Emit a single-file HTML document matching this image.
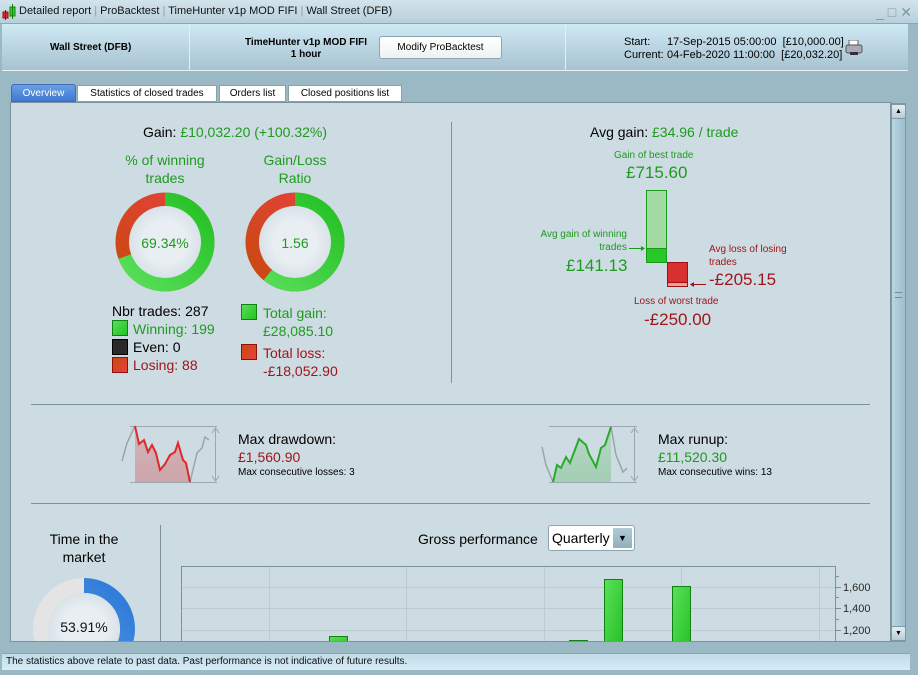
<!DOCTYPE html>
<html><head><meta charset="utf-8"><style>
*{margin:0;padding:0;box-sizing:border-box}
body{width:918px;height:675px;overflow:hidden;background:#9bb9c5;font-family:"Liberation Sans",Arial,sans-serif;position:relative;font-size:11px;color:#000}
.a{position:absolute;white-space:nowrap}
.g{color:#1f9a1f}.r{color:#a0151a}
</style></head><body>
<!-- title bar -->
<div class="a" style="left:0;top:0;width:918px;height:24px;background:linear-gradient(#d2e4ec,#b8d0db);border-bottom:1px solid #8aa6b2"></div>
<svg class="a" style="left:2px;top:4px" width="14" height="16"><rect x="1" y="8" width="5" height="6" fill="#e03030" stroke="#901010"/><line x1="3.5" y1="6" x2="3.5" y2="16" stroke="#901010"/><rect x="8" y="3" width="5" height="9" fill="#30d030" stroke="#108010"/><line x1="10.5" y1="0" x2="10.5" y2="15" stroke="#108010"/></svg>
<div class="a" style="left:19px;top:5px;font-size:11px;color:#111">Detailed report <span style="color:#999">|</span> ProBacktest <span style="color:#999">|</span> TimeHunter v1p MOD FIFI <span style="color:#999">|</span> Wall Street (DFB)</div>
<div class="a" style="left:876px;top:4px;color:#7f98a4;font-size:14px;letter-spacing:4px">_□✕</div>
<!-- header -->
<div class="a" style="left:2px;top:24px;width:906px;height:47px;background:linear-gradient(#cfe9f5,#a7c3cf);border-bottom:1px solid #e8f2f6"></div>
<div class="a" style="left:189px;top:25px;width:1px;height:46px;background:#e6f0f4"></div>
<div class="a" style="left:565px;top:25px;width:1px;height:46px;background:#e6f0f4"></div>
<div class="a" style="left:50px;top:42px;font-weight:bold;font-size:10px">Wall Street (DFB)</div>
<div class="a" style="left:245px;top:37px;font-weight:bold;font-size:10px;text-align:center;line-height:12px">TimeHunter v1p MOD FIFI<br>1 hour</div>
<div class="a" style="left:379px;top:36px;width:123px;height:23px;background:linear-gradient(#fff,#eef2f4);border:1px solid #8ea5b0;border-radius:3px;font-size:10px;text-align:center;line-height:21px">Modify ProBacktest</div>
<div class="a" style="left:624px;top:36px;font-size:11px;line-height:13px">Start:<br>Current:</div>
<div class="a" style="left:667px;top:36px;font-size:11px;line-height:13px">17-Sep-2015 05:00:00&nbsp; [£10,000.00]<br>04-Feb-2020 11:00:00&nbsp; [£20,032.20]</div>
<svg class="a" style="left:845px;top:40px" width="18" height="16"><rect x="4" y="0" width="9" height="6" fill="#fff" stroke="#666"/><rect x="1" y="5" width="16" height="8" rx="2" fill="#aab" stroke="#555"/><rect x="5" y="12" width="8" height="3" fill="#333"/></svg>
<!-- tabs -->
<div class="a" style="left:11px;top:84px;width:65px;height:18px;background:linear-gradient(#6a9fe6,#3f78d0);border:1px solid #3a6cb8;border-radius:3px 3px 0 0;color:#fff;font-size:10px;text-align:center;line-height:17px">Overview</div>
<div class="a" style="left:77px;top:85px;width:140px;height:17px;background:#fff;border:1px solid #8aa0aa;font-size:10px;text-align:center;line-height:16px">Statistics of closed trades</div>
<div class="a" style="left:219px;top:85px;width:67px;height:17px;background:#fff;border:1px solid #8aa0aa;font-size:10px;text-align:center;line-height:16px">Orders list</div>
<div class="a" style="left:288px;top:85px;width:114px;height:17px;background:#fff;border:1px solid #8aa0aa;font-size:10px;text-align:center;line-height:16px">Closed positions list</div>
<!-- content -->
<div class="a" style="left:10px;top:102px;width:881px;height:540px;background:#cddce3;border:1px solid #7b929d;overflow:hidden"></div>
<!-- scrollbar -->
<div class="a" style="left:891px;top:103px;width:15px;height:539px;background:linear-gradient(90deg,#b8d6e2,#9dc0ce);border:1px solid #7e98a4"></div>
<div class="a" style="left:891px;top:104px;width:15px;height:15px;background:linear-gradient(#e4eef2,#b8ccd5);border:1px solid #7e98a4;border-radius:2px;font-size:7px;text-align:center;line-height:13px">▲</div>
<div class="a" style="left:891px;top:626px;width:15px;height:15px;background:linear-gradient(#e4eef2,#b8ccd5);border:1px solid #7e98a4;border-radius:2px;font-size:7px;text-align:center;line-height:13px">▼</div>
<div class="a" style="left:895px;top:292px;width:7px;height:6px;border-top:1px solid #789;border-bottom:1px solid #789"></div>
<!-- top section -->
<div class="a" style="left:0;top:124px;width:470px;text-align:center;font-size:14px">Gain: <span class="g">£10,032.20 (+100.32%)</span></div>
<div class="a" style="left:451px;top:122px;width:1px;height:261px;background:#7b929d"></div>
<div class="a g" style="left:105px;top:151px;width:120px;text-align:center;font-size:14px;line-height:18px">% of winning<br>trades</div>
<div class="a g" style="left:235px;top:151px;width:120px;text-align:center;font-size:14px;line-height:18px">Gain/Loss<br>Ratio</div>
<svg class="a" style="left:0;top:0" width="918" height="675">
<defs>
<linearGradient id="gr" x1="0" y1="0" x2="1" y2="1"><stop offset="0" stop-color="#5ce05c"/><stop offset="1" stop-color="#22c022"/></linearGradient>
<linearGradient id="rd" x1="0" y1="0" x2="1" y2="1"><stop offset="0" stop-color="#c84a10"/><stop offset="1" stop-color="#e84040"/></linearGradient>
<linearGradient id="bl" x1="0" y1="0" x2="1" y2="1"><stop offset="0" stop-color="#5aa0e8"/><stop offset="1" stop-color="#2c78d8"/></linearGradient>
<radialGradient id="in"><stop offset="0.6" stop-color="#e8eef2"/><stop offset="1" stop-color="#d8e2e8"/></radialGradient>
<linearGradient id="pr" x1="0" y1="0" x2="0" y2="1"><stop offset="0" stop-color="#d04040" stop-opacity=".25"/><stop offset="1" stop-color="#d04040" stop-opacity=".35"/></linearGradient>
<linearGradient id="pg" x1="0" y1="0" x2="0" y2="1"><stop offset="0" stop-color="#40b040" stop-opacity=".15"/><stop offset="1" stop-color="#40b040" stop-opacity=".3"/></linearGradient>
</defs>
<g transform="translate(165,242) rotate(-90)">
<circle r="42.5" fill="none" stroke="url(#rd)" stroke-width="14"/>
<circle r="42.5" fill="none" stroke="url(#gr)" stroke-width="14" stroke-dasharray="185.2 300"/>
<circle r="36" fill="url(#in)"/>
</g>
<g transform="translate(295,242) rotate(-90)">
<circle r="42.5" fill="none" stroke="url(#rd)" stroke-width="14"/>
<circle r="42.5" fill="none" stroke="url(#gr)" stroke-width="14" stroke-dasharray="162.6 300"/>
<circle r="36" fill="url(#in)"/>
</g>
<text x="165" y="248" text-anchor="middle" font-size="14" fill="#1f9a1f" font-family="Liberation Sans">69.34%</text>
<text x="295" y="248" text-anchor="middle" font-size="14" fill="#1f9a1f" font-family="Liberation Sans">1.56</text>
<rect x="112.5" y="320.5" width="15" height="15" fill="url(#gr)" stroke="#108010"/>
<rect x="112.5" y="339.5" width="15" height="15" fill="#2a2a2a" stroke="#000"/>
<rect x="112.5" y="357.5" width="15" height="15" fill="url(#rd)" stroke="#901010"/>
<rect x="241.5" y="304.5" width="15" height="15" fill="url(#gr)" stroke="#108010"/>
<rect x="241.5" y="344.5" width="15" height="15" fill="url(#rd)" stroke="#901010"/>
<rect x="646.5" y="190.5" width="20" height="72" fill="#a2dca2" stroke="#1a9a1a"/>
<rect x="646.5" y="248.5" width="20" height="14" fill="#28c828" stroke="#1a9a1a"/>
<rect x="667.5" y="262.5" width="20" height="24" fill="#d83030" stroke="#a01010"/>
<rect x="667.5" y="282.5" width="20" height="4" fill="#e8a0a0" stroke="#a01010"/>
<line x1="629" y1="248.5" x2="644" y2="248.5" stroke="#1a9a1a"/><path d="M641 246l4 2.5-4 2.5z" fill="#1a9a1a"/>
<line x1="692" y1="284.5" x2="706" y2="284.5" stroke="#a01010"/><path d="M694 282l-4 2.5 4 2.5z" fill="#a01010"/>
<line x1="31" y1="404.5" x2="870" y2="404.5" stroke="#7b929d"/>
<line x1="31" y1="503.5" x2="870" y2="503.5" stroke="#7b929d"/>
<line x1="160.5" y1="525" x2="160.5" y2="642" stroke="#7b929d"/>
<line x1="130" y1="426.5" x2="217" y2="426.5" stroke="#99a8b0"/>
<line x1="130" y1="482.5" x2="217" y2="482.5" stroke="#99a8b0"/>
<line x1="215.5" y1="429" x2="215.5" y2="480" stroke="#99a8b0"/>
<path d="M212 433l3.5-5 3.5 5M212 476l3.5 5 3.5-5" fill="none" stroke="#99a8b0"/>
<path d="M135 426L139 444L144 440L148 452L152 445L156 453L160 470L165 464L170 455L175 452L178 443L183 460L186 463L190 482L135 482Z" fill="url(#pr)"/>
<path d="M122 461L127 443L135 426M190 482L197 453L202 448L205 437L209 440" fill="none" stroke="#9aa5aa" stroke-width="1.5"/>
<path d="M135 426L139 444L144 440L148 452L152 445L156 453L160 470L165 464L170 455L175 452L178 443L183 460L186 463L190 482" fill="none" stroke="#e02828" stroke-width="2"/>
<line x1="549" y1="426.5" x2="637" y2="426.5" stroke="#99a8b0"/>
<line x1="549" y1="482.5" x2="637" y2="482.5" stroke="#99a8b0"/>
<line x1="634.5" y1="429" x2="634.5" y2="480" stroke="#99a8b0"/>
<path d="M631 433l3.5-5 3.5 5M631 476l3.5 5 3.5-5" fill="none" stroke="#99a8b0"/>
<path d="M553 482L557 465L561 468L566 457L570 463L579 439L586 445L589 454L596 467L601 448L605 445L611 427L611 482Z" fill="url(#pg)"/>
<path d="M542 447L546 465L553 482M611 427L616 455L623 472L627 468" fill="none" stroke="#9aa5aa" stroke-width="1.5"/>
<path d="M553 482L557 465L561 468L566 457L570 463L579 439L586 445L589 454L596 467L601 448L605 445L611 427" fill="none" stroke="#2aaa2a" stroke-width="2"/>
<g transform="translate(84,629) rotate(-90)">
<circle r="43.5" fill="none" stroke="#e4e4e4" stroke-width="15"/>
<circle r="43.5" fill="none" stroke="url(#bl)" stroke-width="15" stroke-dasharray="147.3 300"/>
<circle r="36" fill="url(#in)"/>
</g>
<text x="84" y="632" text-anchor="middle" font-size="14" fill="#111" font-family="Liberation Sans">53.91%</text>
<rect x="181.5" y="566.5" width="654" height="80" fill="none" stroke="#7b929d"/>
<g stroke="#bccbd2"><line x1="269.5" y1="567" x2="269.5" y2="642"/><line x1="406.5" y1="567" x2="406.5" y2="642"/><line x1="544.5" y1="567" x2="544.5" y2="642"/><line x1="681.5" y1="567" x2="681.5" y2="642"/><line x1="819.5" y1="567" x2="819.5" y2="642"/>
<line x1="182" y1="587.5" x2="835" y2="587.5"/><line x1="182" y1="608.5" x2="835" y2="608.5"/><line x1="182" y1="630.5" x2="835" y2="630.5"/></g>
<g stroke="#7b929d"><line x1="836" y1="576.5" x2="839" y2="576.5"/><line x1="836" y1="587.5" x2="841" y2="587.5"/><line x1="836" y1="597.5" x2="839" y2="597.5"/><line x1="836" y1="608.5" x2="841" y2="608.5"/><line x1="836" y1="619.5" x2="839" y2="619.5"/><line x1="836" y1="630.5" x2="841" y2="630.5"/></g>
<g fill="#2a2a2a" font-size="11" font-family="Liberation Sans"><text x="843" y="591">1,600</text><text x="843" y="612">1,400</text><text x="843" y="634">1,200</text></g>
<g fill="url(#gr)" stroke="#108010"><rect x="329.5" y="636.5" width="18" height="10"/><rect x="569.5" y="640.5" width="18" height="6"/><rect x="604.5" y="579.5" width="18" height="70"/><rect x="672.5" y="586.5" width="18" height="70"/></g>
</svg>
<div class="a" style="left:0;top:642px;width:918px;height:33px;background:#9bb9c5"></div>
<div class="a" style="left:10px;top:641px;width:882px;height:1px;background:#7b929d"></div>
<div class="a" style="left:112px;top:303px;font-size:14px">Nbr trades: 287</div>
<div class="a g" style="left:133px;top:321px;font-size:14px">Winning: 199</div>
<div class="a" style="left:133px;top:339px;font-size:14px">Even: 0</div>
<div class="a r" style="left:133px;top:357px;font-size:14px">Losing: 88</div>
<div class="a g" style="left:263px;top:304px;font-size:14px;line-height:18px">Total gain:<br>£28,085.10</div>
<div class="a r" style="left:263px;top:344px;font-size:14px;line-height:18px">Total loss:<br>-£18,052.90</div>
<div class="a" style="left:590px;top:124px;font-size:14px">Avg gain: <span class="g">£34.96 / trade</span></div>
<div class="a g" style="left:614px;top:150px;font-size:10px">Gain of best trade</div>
<div class="a g" style="left:626px;top:163px;font-size:17px">£715.60</div>
<div class="a g" style="left:529px;top:228px;font-size:10px;text-align:right;line-height:13px;width:98px">Avg gain of winning<br>trades</div>
<div class="a g" style="left:566px;top:256px;font-size:17px">£141.13</div>
<div class="a r" style="left:709px;top:243px;font-size:10px;line-height:13px">Avg loss of losing<br>trades</div>
<div class="a r" style="left:709px;top:270px;font-size:17px">-£205.15</div>
<div class="a r" style="left:634px;top:296px;font-size:10px">Loss of worst trade</div>
<div class="a r" style="left:644px;top:310px;font-size:17px">-£250.00</div>
<div class="a" style="left:238px;top:431px;font-size:14px">Max drawdown:</div>
<div class="a r" style="left:238px;top:449px;font-size:14px">£1,560.90</div>
<div class="a" style="left:238px;top:467px;font-size:10px">Max consecutive losses: 3</div>
<div class="a" style="left:658px;top:431px;font-size:14px">Max runup:</div>
<div class="a g" style="left:658px;top:449px;font-size:14px">£11,520.30</div>
<div class="a" style="left:658px;top:467px;font-size:10px">Max consecutive wins: 13</div>
<div class="a" style="left:24px;top:530px;width:120px;text-align:center;font-size:14px;line-height:18px">Time in the<br>market</div>
<div class="a" style="left:418px;top:531px;font-size:14px">Gross performance</div>
<div class="a" style="left:548px;top:525px;width:87px;height:26px;background:#fff;border:1px solid #8ea5b0;border-radius:3px;font-size:14px;padding:4px 0 0 3px">Quarterly</div>
<div class="a" style="left:613px;top:528px;width:19px;height:20px;background:linear-gradient(#b0cad6,#90b0be);font-size:9px;text-align:center;line-height:20px">▼</div>
<div class="a" style="left:2px;top:653px;width:908px;height:17px;background:linear-gradient(#c0dbe6,#d6ecf6);border-top:1px solid #8aa6b2"></div>
<div class="a" style="left:6px;top:656px;font-size:10px;color:#111">The statistics above relate to past data. Past performance is not indicative of future results.</div>
</body></html>
